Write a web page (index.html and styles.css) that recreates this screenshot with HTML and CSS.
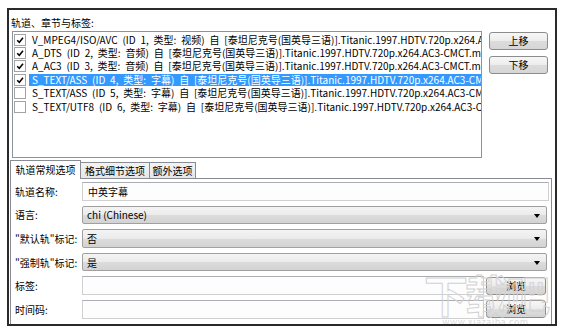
FILE: index.html
```html
<!DOCTYPE html>
<html lang="zh-CN">
<head>
<meta charset="utf-8">
<title>轨道、章节与标签</title>
<link rel="stylesheet" href="styles.css">
</head>
<body>
<div class="frame">
  <div class="section-label">轨道、章节与标签:</div>
  <div class="top">
    <div class="list">
      <div class="row"><span class="cb"><svg viewBox="0 0 10 10" width="10" height="10"><path d="M2.2 5.2 L4.3 7.3 L8 2.8" fill="none" stroke="#000" stroke-width="1.5"/></svg></span><span class="txt">V_MPEG4/ISO/AVC (ID 1, 类型: 视频) 自 [泰坦尼克号(国英导三语)].Titanic.1997.HDTV.720p.x264.AC3-CMCT.mkv</span></div>
      <div class="row"><span class="cb"><svg viewBox="0 0 10 10" width="10" height="10"><path d="M2.2 5.2 L4.3 7.3 L8 2.8" fill="none" stroke="#000" stroke-width="1.5"/></svg></span><span class="txt">A_DTS (ID 2, 类型: 音频) 自 [泰坦尼克号(国英导三语)].Titanic.1997.HDTV.720p.x264.AC3-CMCT.mkv</span></div>
      <div class="row"><span class="cb"><svg viewBox="0 0 10 10" width="10" height="10"><path d="M2.2 5.2 L4.3 7.3 L8 2.8" fill="none" stroke="#000" stroke-width="1.5"/></svg></span><span class="txt">A_AC3 (ID 3, 类型: 音频) 自 [泰坦尼克号(国英导三语)].Titanic.1997.HDTV.720p.x264.AC3-CMCT.mkv</span></div>
      <div class="row"><span class="cb"><svg viewBox="0 0 10 10" width="10" height="10"><path d="M2.2 5.2 L4.3 7.3 L8 2.8" fill="none" stroke="#000" stroke-width="1.5"/></svg></span><span class="txt selected">S_TEXT/ASS (ID 4, 类型: 字幕) 自 [泰坦尼克号(国英导三语)].Titanic.1997.HDTV.720p.x264.AC3-CMCT.mkv</span></div>
      <div class="row"><span class="cb"></span><span class="txt">S_TEXT/ASS (ID 5, 类型: 字幕) 自 [泰坦尼克号(国英导三语)].Titanic.1997.HDTV.720p.x264.AC3-CMCT.mkv</span></div>
      <div class="row"><span class="cb"></span><span class="txt">S_TEXT/UTF8 (ID 6, 类型: 字幕) 自 [泰坦尼克号(国英导三语)].Titanic.1997.HDTV.720p.x264.AC3-CMCT.mkv</span></div>
    </div>
    <div class="side">
      <button class="btn">上移</button>
      <button class="btn">下移</button>
    </div>
  </div>
  <div class="tabs">
    <div class="tab active">轨道常规选项</div>
    <div class="tab t2">格式细节选项</div>
    <div class="tab t3">额外选项</div>
  </div>
  <div class="panel">
    <div class="form-row"><span class="lbl">轨道名称:</span><div class="input">中英字幕</div></div>
    <div class="form-row"><span class="lbl">语言:</span><div class="combo">chi (Chinese)</div></div>
    <div class="form-row"><span class="lbl">"默认轨"标记:</span><div class="combo">否</div></div>
    <div class="form-row"><span class="lbl">"强制轨"标记:</span><div class="combo">是</div></div>
    <div class="form-row"><span class="lbl">标签:</span><div class="input"></div><button class="btn browse">浏览</button></div>
    <div class="form-row"><span class="lbl">时间码:</span><div class="input"></div><button class="btn browse">浏览</button></div>
  </div>
  <div class="watermark" aria-hidden="true"><div class="wm-big">下载吧</div><div class="wm-small">www.xiazaiba.com</div></div>
</div>
</body>
</html>
```
FILE: styles.css
```css
body {
  margin: 0;
  background: #fff;
  font-family: "Noto Sans CJK SC", sans-serif;
  font-size: 10px;
  color: #000;
}

.frame {
  position: relative;
  margin: 8px 0 0 7px;
  width: 550px;
  height: 318px;
  box-sizing: border-box;
  border: 2px solid #2a2a2a;
  overflow: hidden;
  background: #fff;
}

.section-label {
  margin: 7px 0 0 2px;
  height: 12px;
  line-height: 12px;
}

.top {
  display: flex;
  margin-top: 2px;
  padding-left: 3px;
  gap: 7px;
}

.list {
  flex: none;
  width: 470px;
  height: 127px;
  box-sizing: border-box;
  border: 1px solid #8e9299;
  padding: 1px 0 0 1px;
  overflow: hidden;
  background: #fff;
}

.row {
  height: 13.4px;
  display: flex;
  align-items: center;
  white-space: nowrap;
  overflow: hidden;
}

.cb {
  flex: none;
  width: 12px;
  height: 12px;
  box-sizing: border-box;
  border: 1px solid #a3a3a3;
  background: #fff;
  margin-right: 3px;
  display: flex;
  align-items: center;
  justify-content: center;
}

.txt {
  flex: 1;
  min-width: 0;
  overflow: hidden;
  height: 12px;
  line-height: 12px;
  padding: 0 3px;
  word-spacing: 2.6px;
}

.txt.selected {
  background: #3399ff;
  color: #fff;
}

.side {
  display: flex;
  flex-direction: column;
  gap: 6px;
  padding-top: 1px;
}

.btn {
  width: 59px;
  height: 18px;
  box-sizing: border-box;
  border: 1px solid #8c8c8c;
  border-radius: 3px;
  background: linear-gradient(#f7f7f7, #ececec 50%, #dcdcdc 51%, #d6d6d6);
  font: inherit;
  color: #000;
  padding: 0;
  line-height: 14px;
}

.tabs {
  position: relative;
  z-index: 1;
  display: flex;
  align-items: flex-end;
  height: 18px;
  margin: 2px 0 0 1px;
}

.tab {
  box-sizing: border-box;
  height: 16px;
  border: 1px solid #898c95;
  border-bottom: none;
  background: linear-gradient(#f3f3f3, #e6e6e6);
  text-align: center;
  line-height: 16px;
  white-space: nowrap;
}

.tab.active {
  width: 71px;
  height: 19px;
  margin-bottom: -1px;
  background: #fff;
  line-height: 18px;
}

.tab.t2 {
  width: 69px;
  border-left: none;
}

.tab.t3 {
  width: 46px;
  border-left: none;
}

.panel {
  margin-left: 1px;
  width: 542px;
  height: 200px;
  box-sizing: border-box;
  border: 1px solid #898c95;
  background: #fff;
  padding: 3px 2px 0 4px;
}

.form-row {
  display: flex;
  align-items: center;
  height: 18.6px;
  margin-bottom: 5px;
}

.lbl {
  flex: none;
  width: 67px;
  white-space: nowrap;
}

.input {
  flex: 1;
  height: 100%;
  box-sizing: border-box;
  border: 1px solid #d0d0d0;
  border-top-color: #abadb3;
  background: #fdfdfd;
  padding-left: 5px;
  display: flex;
  align-items: center;
}

.combo {
  position: relative;
  flex: 1;
  height: 100%;
  margin-right: 2px;
  box-sizing: border-box;
  border: 1px solid #a0a0a0;
  border-radius: 2px;
  background: linear-gradient(#f4f4f4, #ebebeb 50%, #dcdcdc 51%, #d3d3d3);
  padding-left: 4px;
  display: flex;
  align-items: center;
}

.combo::after {
  content: "";
  position: absolute;
  right: 6px;
  top: 50%;
  margin-top: -1px;
  border-top: 4px solid #000;
  border-left: 3px solid transparent;
  border-right: 3px solid transparent;
}

.btn.browse {
  flex: none;
  width: 60px;
  height: 18px;
  margin: 0 3px 0 2px;
}

.watermark {
  position: absolute;
  right: 8px;
  bottom: -3px;
  color: transparent;
  pointer-events: none;
  text-align: center;
}

.wm-big {
  font-size: 44px;
  font-weight: bold;
  line-height: 46px;
  -webkit-text-stroke: 1px #d2d2d2;
  letter-spacing: -3px;
}

.wm-small {
  font-size: 9px;
  line-height: 10px;
  color: #dadada;
  letter-spacing: 0.5px;
}
```
